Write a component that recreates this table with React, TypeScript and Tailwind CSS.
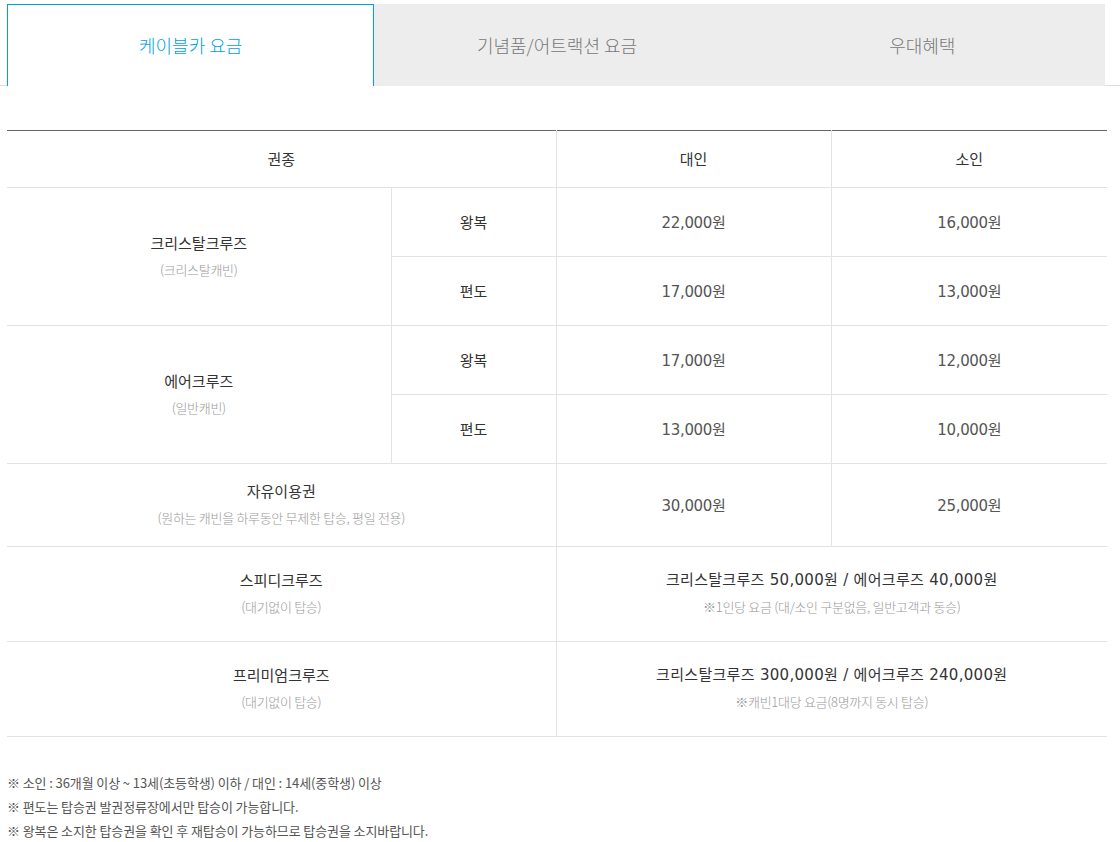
import React from 'react';

const tabs = ['케이블카 요금', '기념품/어트랙션 요금', '우대혜택'];

const numFont = { fontFamily: '"DejaVu Sans", "Noto Sans CJK KR", sans-serif' };

type CellProps = {
  children: React.ReactNode;
  className?: string;
  rowSpan?: number;
  colSpan?: number;
};

const Cell = ({ children, className = '', rowSpan, colSpan }: CellProps) => (
  <td
    rowSpan={rowSpan}
    colSpan={colSpan}
    className={`border-b border-[#e3e3e3] text-center align-middle ${className}`}
  >
    {children}
  </td>
);

const Title = ({ main, sub, num }: { main: string; sub: string; num?: boolean }) => (
  <div className="flex flex-col items-center gap-[8px] pb-[2px]">
    <span
      className={`text-[15px] leading-[20px] ${num ? 'text-[#333] tracking-[0.3px]' : 'text-[#333]'}`}
      style={num ? numFont : undefined}
    >
      {main}
    </span>
    <span className="text-[13px] leading-[18px] tracking-[-0.3px] text-[#999] font-light">{sub}</span>
  </div>
);

const Price = ({ value }: { value: string }) => (
  <span className="text-[15px] text-[#555] tracking-[-0.3px]" style={numFont}>{value}</span>
);

export default function App() {
  return (
    <div
      className="w-[1120px] min-h-[842px] bg-white pt-[4px]"
      style={{ fontFamily: '"Noto Sans CJK KR", "Noto Sans", sans-serif' }}
    >
      <div className="border-b border-[#dddddd]">
        <ul className="flex ml-[7px] w-[1098px] -mb-px">
          {tabs.map((t, i) => (
            <li
              key={t}
              className={
                i === 0
                  ? 'flex-1 h-[82px] flex items-center justify-center bg-white border border-b-0 border-[#00a0e9] text-[18px] font-light text-[#00a0e9]'
                  : 'flex-1 h-[82px] flex items-center justify-center bg-[#ededed] text-[18px] font-light text-[#777]'
              }
            >
              {t}
            </li>
          ))}
        </ul>
      </div>

      <table className="ml-[7px] mt-[44px] w-[1100px] table-fixed border-collapse border-t border-[#666]">
        <colgroup>
          <col className="w-[384px]" />
          <col className="w-[165px]" />
          <col className="w-[275px]" />
          <col className="w-[276px]" />
        </colgroup>
        <thead>
          <tr className="h-[57px]">
            <th colSpan={2} className="border-b border-r border-[#e3e3e3] font-normal text-[15px] text-[#333]">권종</th>
            <th className="border-b border-r border-[#e3e3e3] font-normal text-[15px] text-[#333]">대인</th>
            <th className="border-b border-[#e3e3e3] font-normal text-[15px] text-[#333]">소인</th>
          </tr>
        </thead>
        <tbody>
          <tr className="h-[69px]">
            <Cell rowSpan={2} className="border-r">
              <Title main="크리스탈크루즈" sub="(크리스탈캐빈)" />
            </Cell>
            <Cell className="border-r text-[15px] text-[#333]">왕복</Cell>
            <Cell className="border-r"><Price value="22,000원" /></Cell>
            <Cell><Price value="16,000원" /></Cell>
          </tr>
          <tr className="h-[69px]">
            <Cell className="border-r text-[15px] text-[#333]">편도</Cell>
            <Cell className="border-r"><Price value="17,000원" /></Cell>
            <Cell><Price value="13,000원" /></Cell>
          </tr>
          <tr className="h-[69px]">
            <Cell rowSpan={2} className="border-r">
              <Title main="에어크루즈" sub="(일반캐빈)" />
            </Cell>
            <Cell className="border-r text-[15px] text-[#333]">왕복</Cell>
            <Cell className="border-r"><Price value="17,000원" /></Cell>
            <Cell><Price value="12,000원" /></Cell>
          </tr>
          <tr className="h-[69px]">
            <Cell className="border-r text-[15px] text-[#333]">편도</Cell>
            <Cell className="border-r"><Price value="13,000원" /></Cell>
            <Cell><Price value="10,000원" /></Cell>
          </tr>
          <tr className="h-[83px]">
            <Cell colSpan={2} className="border-r">
              <Title main="자유이용권" sub="(원하는 캐빈을 하루동안 무제한 탑승, 평일 전용)" />
            </Cell>
            <Cell className="border-r"><Price value="30,000원" /></Cell>
            <Cell><Price value="25,000원" /></Cell>
          </tr>
          <tr className="h-[95px]">
            <Cell colSpan={2} className="border-r">
              <Title main="스피디크루즈" sub="(대기없이 탑승)" />
            </Cell>
            <Cell colSpan={2}>
              <Title num main="크리스탈크루즈 50,000원 / 에어크루즈 40,000원" sub="※1인당 요금 (대/소인 구분없음, 일반고객과 동승)" />
            </Cell>
          </tr>
          <tr className="h-[95px]">
            <Cell colSpan={2} className="border-r">
              <Title main="프리미엄크루즈" sub="(대기없이 탑승)" />
            </Cell>
            <Cell colSpan={2}>
              <Title num main="크리스탈크루즈 300,000원 / 에어크루즈 240,000원" sub="※캐빈1대당 요금(8명까지 동시 탑승)" />
            </Cell>
          </tr>
        </tbody>
      </table>

      <ul className="ml-[7px] mt-[34px] text-[13px] leading-[24px] tracking-[-0.1px] text-[#555]">
        <li>※ 소인 : 36개월 이상 ~ 13세(초등학생) 이하 / 대인 : 14세(중학생) 이상</li>
        <li>※ 편도는 탑승권 발권정류장에서만 탑승이 가능합니다.</li>
        <li>※ 왕복은 소지한 탑승권을 확인 후 재탑승이 가능하므로 탑승권을 소지바랍니다.</li>
      </ul>
    </div>
  );
}
